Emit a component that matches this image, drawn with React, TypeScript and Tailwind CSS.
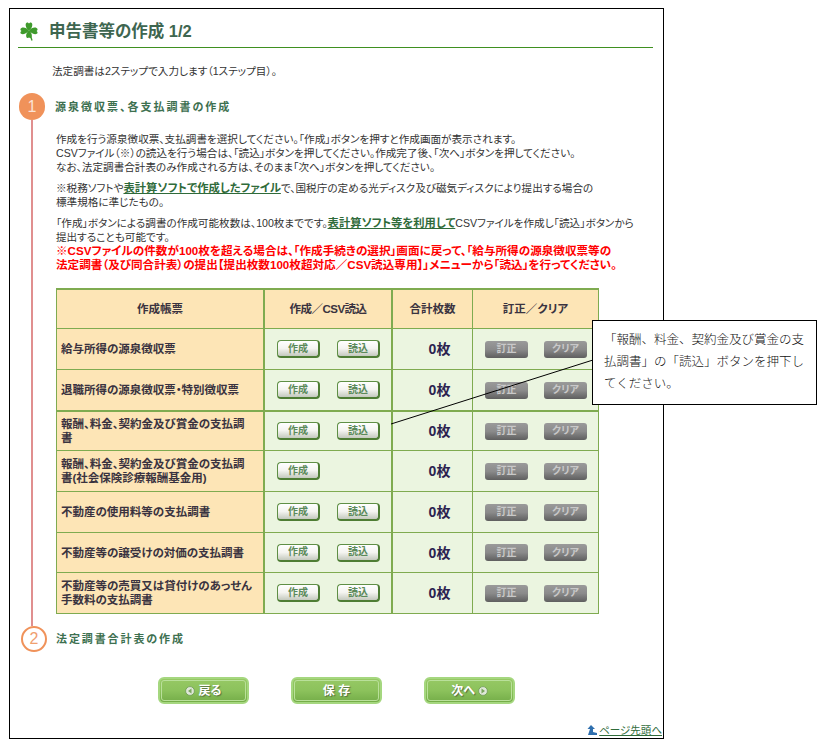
const jp = { fontFamily: '"Liberation Sans", "Noto Sans CJK JP", sans-serif' };

const rows = [
  { name: ["給与所得の源泉徴収票"], read: true, h: "h-[41px]" },
  { name: ["退職所得の源泉徴収票・特別徴収票"], read: true, h: "h-[41px]" },
  { name: ["報酬、料金、契約金及び賞金の支払調", "書"], read: true, thick: true, h: "h-[40px]" },
  { name: ["報酬、料金、契約金及び賞金の支払調", "書(社会保険診療報酬基金用)"], read: false, h: "h-[41px]" },
  { name: ["不動産の使用料等の支払調書"], read: true, h: "h-[41px]" },
  { name: ["不動産等の譲受けの対価の支払調書"], read: true, h: "h-[40px]" },
  { name: ["不動産等の売買又は貸付けのあっせん", "手数料の支払調書"], read: true, h: "h-[41px]" },
];

function Clover() {
  return (
    <svg width="20" height="20" viewBox="0 0 20 20" className="shrink-0">
      <g fill="#3f9a2c">
        <path d="M10 9.5 C6 7 6 2 8 1.5 C9 1.2 9.7 2 10 2.6 C10.3 2 11 1.2 12 1.5 C14 2 14 7 10 9.5 Z" />
        <path d="M10 9.5 C13 5.5 18 6 18.5 8 C18.8 9 18 9.8 17.4 10 C18 10.3 18.8 11 18.5 12 C18 14 13 13.5 10 9.5 Z" />
        <path d="M10 9.5 C7 5.5 2 6 1.5 8 C1.2 9 2 9.8 2.6 10 C2 10.3 1.2 11 1.5 12 C2 14 7 13.5 10 9.5 Z" />
        <path d="M10 9.5 C6.5 12 6.5 16.5 8.5 17 C9.3 17.2 9.8 16.6 10 16 C10.2 16.6 10.7 17.2 11.5 17 C13.5 16.5 13.5 12 10 9.5 Z" />
      </g>
      <path d="M10 10 L13 19.5" stroke="#3f9a2c" strokeWidth="1.4" fill="none" />
    </svg>
  );
}

function GreenBtn({ label }: { label: string }) {
  return (
    <span className="flex h-[18px] w-[43px] items-center justify-center rounded-[4px] border border-[#5f8f45] border-b-2 border-r-2 border-b-[#4e7d34] border-r-[#4e7d34] bg-gradient-to-b from-white via-[#f4f4f0] to-[#c4c9be] text-[10px] font-bold text-[#5b8a5a]">
      {label}
    </span>
  );
}

function GrayBtn({ label }: { label: string }) {
  return (
    <span className="flex h-[17px] w-[43px] items-center justify-center rounded-[3px] bg-gradient-to-b from-[#9a9a9a] via-[#8a8a8a] to-[#5f5f5f] text-[10px] font-bold text-[#c9c9c9]">
      {label}
    </span>
  );
}

function NavBtn({ children }: { children: React.ReactNode }) {
  return (
    <span className="flex h-[27px] w-[91px] items-center justify-center gap-[3px] rounded-[6px] border-2 border-[#a5d77f] bg-gradient-to-b from-[#96c864] via-[#8cc25c] to-[#74ad48] text-[12px] font-bold text-white outline outline-1 -outline-offset-4 outline-[#b9e09a] [text-shadow:1px_1px_1px_#55703f]">
      {children}
    </span>
  );
}

function NavDot({ dir }: { dir: "l" | "r" }) {
  return (
    <svg width="10" height="10" viewBox="0 0 10 10">
      <circle cx="5" cy="5" r="4.4" fill="#dfe8d8" stroke="#6f9a55" strokeWidth="0.8" />
      <path d={dir === "l" ? "M6.5 2.6 L3 5 L6.5 7.4 Z" : "M3.5 2.6 L7 5 L3.5 7.4 Z"} fill="#7aa65e" />
    </svg>
  );
}

function Row({ row }: { row: (typeof rows)[number] }) {
  const top = row.thick ? "border-t-2" : "border-t";
  return (
    <div className={`grid grid-cols-[208px_128px_80px_125px] ${row.h}`}>
      <div className={`flex flex-col justify-center border-r-2 border-[#7fab50] bg-[#fde5b6] pl-[4px] text-[11.5px] font-bold leading-[14px] text-[#3a3340] ${top}`}>
        {row.name.map((l) => (
          <span key={l} className="whitespace-nowrap">{l}</span>
        ))}
      </div>
      <div className={`flex items-center gap-[17px] border-r-2 border-[#7fab50] bg-[#ebf5e0] pl-[12px] ${top}`}>
        <GreenBtn label="作成" />
        {row.read && <GreenBtn label="読込" />}
      </div>
      <div className={`flex items-center justify-center border-r border-[#7fab50] bg-[#ebf5e0] pl-[14px] text-[14px] font-bold text-[#2c2350] ${top}`}>
        0枚
      </div>
      <div className={`flex items-center gap-[16px] border-[#7fab50] bg-[#ebf5e0] pl-[12px] ${top}`}>
        <GrayBtn label="訂正" />
        <GrayBtn label="クリア" />
      </div>
    </div>
  );
}

export default function App() {
  return (
    <div className="relative h-[744px] w-[826px] overflow-hidden bg-white pl-[9px] pt-[8px] text-[#333] [font-feature-settings:'palt']" style={jp}>
      <div className="flex h-[731px] w-[655px] flex-col border border-black pl-[8px] pr-[10px] text-[10.6px] leading-[14px]">
        {/* title */}
        <div className="flex h-[39px] items-center gap-[10px] border-b border-[#3f9020] pt-[5px] pl-[1px]">
          <Clover />
          <h1 className="text-[16.5px] font-bold text-[#3e6650]">申告書等の作成 1/2</h1>
        </div>
        <p className="ml-[34px] mt-[16px]">法定調書は2ステップで入力します（1ステップ目）。</p>

        {/* step 1 */}
        <div className="mt-[15px] flex">
          <div className="flex w-[28px] shrink-0 flex-col items-center">
            <span className="flex h-[27px] w-[26px] shrink-0 items-center justify-center rounded-full bg-[#f0925a] text-[16px] text-[#fbe3d4]">1</span>
            <span className="h-[506px] w-[2px] bg-[#e08f8f]" />
          </div>
          <div className="ml-[9px] w-[590px]">
            <h2 className="mt-[7px] text-[11px] font-bold tracking-[2px] text-[#3d7050]">源泉徴収票、各支払調書の作成</h2>
            <div className="ml-[1px] mt-[18px] space-y-[7px] whitespace-nowrap">
              <p>
                作成を行う源泉徴収票、支払調書を選択してください。「作成」ボタンを押すと作成画面が表示されます。<br />
                CSVファイル（※）の読込を行う場合は、「読込」ボタンを押してください。作成完了後、「次へ」ボタンを押してください。<br />
                なお、法定調書合計表のみ作成される方は、そのまま「次へ」ボタンを押してください。
              </p>
              <p>
                ※税務ソフトや<a className="text-[11.3px] font-bold text-[#2f6b3a] underline">表計算ソフトで作成したファイル</a>で、国税庁の定める光ディスク及び磁気ディスクにより提出する場合の<br />
                標準規格に準じたもの。
              </p>
              <p>
                「作成」ボタンによる調書の作成可能枚数は、100枚までです。<a className="text-[11.3px] font-bold text-[#2f6b3a] underline">表計算ソフト等を利用して</a>CSVファイルを作成し「読込」ボタンから<br />
                提出することも可能です。<br />
                <span className="text-[11.6px] font-bold text-[#ff0000]">
                  ※CSVファイルの件数が100枚を超える場合は、「作成手続きの選択」画面に戻って、「給与所得の源泉徴収票等の<br />
                  法定調書（及び同合計表）の提出【提出枚数100枚超対応／CSV読込専用】」メニューから「読込」を行ってください。
                </span>
              </p>
            </div>

            {/* table */}
            <div className="ml-[1px] mt-[16px] w-[543px] border-x border-b border-t-2 border-[#7fab50]">
              <div className="grid h-[38px] grid-cols-[208px_128px_80px_125px] bg-[#fde5b6] text-center text-[11.5px] font-bold text-[#3a3340]">
                <div className="flex items-center justify-center border-r-2 border-[#7fab50]">作成帳票</div>
                <div className="flex items-center justify-center border-r-2 border-[#7fab50] tracking-[-0.5px]">作成／CSV読込</div>
                <div className="flex items-center justify-center border-r border-[#7fab50]">合計枚数</div>
                <div className="flex items-center justify-center">訂正／クリア</div>
              </div>
              {rows.map((r) => (
                <Row key={r.name.join()} row={r} />
              ))}
            </div>
          </div>
        </div>

        {/* step 2 */}
        <div className="flex items-center">
          <span className="ml-[3px] flex h-[26px] w-[26px] items-center justify-center rounded-full border-2 border-[#f0925a] bg-white text-[16px] text-[#f0a070]">2</span>
          <h2 className="ml-[9px] text-[11px] font-bold tracking-[1.9px] text-[#3d7050]">法定調書合計表の作成</h2>
        </div>

        {/* nav */}
        <div className="ml-[140px] mt-[25px] flex gap-[42px]">
          <NavBtn><NavDot dir="l" />戻る</NavBtn>
          <NavBtn>保 存</NavBtn>
          <NavBtn>次へ<NavDot dir="r" /></NavBtn>
        </div>
        <div className="-mr-[9px] mt-auto flex items-center justify-end gap-[2px] pb-[1px]">
          <svg width="10" height="10" viewBox="0 0 10 10">
            <path d="M4 0 L8 4 L6 4 L6 7 L10 8 L10 10 L1 10 L3 4 L0.5 4 Z" fill="#2f6fae" />
          </svg>
          <a className="text-[10.5px] text-[#2f6b3a] underline">ページ先頭へ</a>
        </div>
      </div>

      {/* callout */}
      <svg className="absolute left-[390px] top-[358px]" width="206" height="68" viewBox="0 0 206 68">
        <line x1="1" y1="66" x2="203" y2="2" stroke="#000" strokeWidth="1" />
      </svg>
      <div className="absolute left-[592px] top-[320px] h-[85px] w-[225px] border border-black bg-white pl-[11px] pt-[8px] text-[12.5px] font-light leading-[22px] text-[#111] [font-feature-settings:normal]">
        <p>「報酬、料金、契約金及び賞金の支</p>
        <p>払調書」の「読込」ボタンを押下し</p>
        <p>てください。</p>
      </div>
    </div>
  );
}
